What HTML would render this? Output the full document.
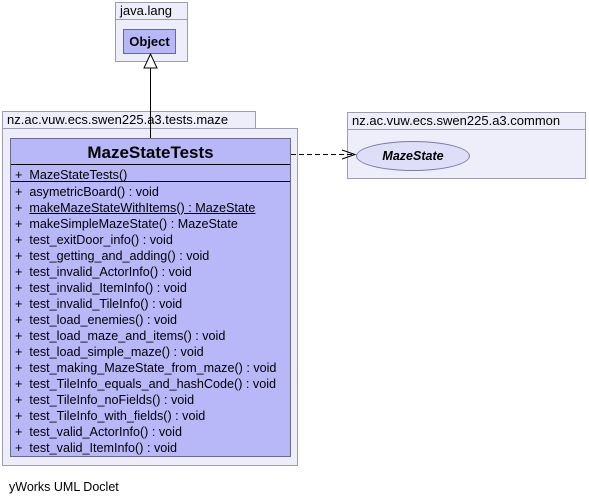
<!DOCTYPE html>
<html><head><meta charset="utf-8"><style>
body{margin:0;width:589px;height:503px;background:#fff;position:relative;font-family:"Liberation Sans","DejaVu Sans",sans-serif;font-size:12px;color:#000;overflow:hidden}
.a{position:absolute;box-sizing:border-box}
.pk{background:#eeeefa;border:1px solid #9c9cb4}
.t{line-height:16px;padding-left:4px;white-space:nowrap;font-size:13px}
.m{position:absolute;left:4px;white-space:nowrap;line-height:16px;font-size:12.6px}
</style></head><body>
<div class="a pk t" style="left:115px;top:2px;width:73px;height:18px">java.lang</div>
<div class="a pk" style="left:115px;top:19px;width:73px;height:43px"></div>
<div class="a" style="left:123px;top:29px;width:53px;height:25px;background:#b8b8f8;border:1px solid #6a6a90;font-weight:bold;font-size:13px;text-align:center;line-height:23px">Object</div>

<div class="a pk t" style="left:2px;top:111px;width:254px;height:18px">nz.ac.vuw.ecs.swen225.a3.tests.maze</div>
<div class="a pk" style="left:2px;top:128px;width:296px;height:338px"></div>

<div class="a pk t" style="left:347px;top:112px;width:239px;height:18px">nz.ac.vuw.ecs.swen225.a3.common</div>
<div class="a pk" style="left:347px;top:129px;width:239px;height:50px"></div>
<div class="a" style="left:356px;top:141px;width:114px;height:30px;border-radius:50%;background:#dedef8;border:1px solid #7c7ca0;text-align:center;line-height:28px;font-weight:bold;font-style:italic;font-size:12.5px">MazeState</div>

<div class="a" style="left:10px;top:138px;width:281px;height:319px;background:#b8b8f8;border:1px solid #6a6a90">
<div style="position:absolute;left:0;right:0;top:0;height:25px;text-align:center;font-weight:bold;font-size:17px;line-height:27px">MazeStateTests</div>
<div style="position:absolute;left:0;right:0;top:25px;border-top:1px solid #000"></div>
<div class="m" style="top:28px">+&nbsp; MazeStateTests()</div>
<div style="position:absolute;left:0;right:0;top:42px;border-top:1px solid #000"></div>
<div class="m" style="top:45px">+&nbsp; asymetricBoard() : void<br>+&nbsp; <u>makeMazeStateWithItems() : MazeState</u><br>+&nbsp; makeSimpleMazeState() : MazeState<br>+&nbsp; test_exitDoor_info() : void<br>+&nbsp; test_getting_and_adding() : void<br>+&nbsp; test_invalid_ActorInfo() : void<br>+&nbsp; test_invalid_ItemInfo() : void<br>+&nbsp; test_invalid_TileInfo() : void<br>+&nbsp; test_load_enemies() : void<br>+&nbsp; test_load_maze_and_items() : void<br>+&nbsp; test_load_simple_maze() : void<br>+&nbsp; test_making_MazeState_from_maze() : void<br>+&nbsp; test_TileInfo_equals_and_hashCode() : void<br>+&nbsp; test_TileInfo_noFields() : void<br>+&nbsp; test_TileInfo_with_fields() : void<br>+&nbsp; test_valid_ActorInfo() : void<br>+&nbsp; test_valid_ItemInfo() : void</div>
</div>

<svg class="a" style="left:0;top:0" width="589" height="503">
<line x1="150.5" y1="68" x2="150.5" y2="138" stroke="#000"/>
<polygon points="150.5,54 144,68 157,68" fill="#fff" stroke="#000"/>
<line x1="291" y1="154.5" x2="354" y2="154.5" stroke="#000" stroke-dasharray="5,3"/>
<polyline points="342,150 355,154.5 342,159" fill="none" stroke="#000"/>
</svg>
<div class="a" style="left:9px;top:480px;white-space:nowrap;font-size:12.5px">yWorks UML Doclet</div>
</body></html>
